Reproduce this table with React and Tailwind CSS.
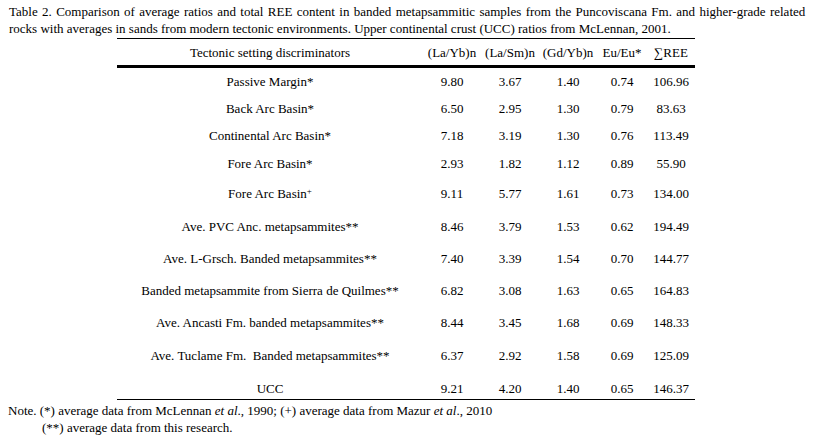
import React from "react";

const rows = [
  { label: "Passive Margin*", v: ["9.80", "3.67", "1.40", "0.74", "106.96"], h: "h-[27px]" },
  { label: "Back Arc Basin*", v: ["6.50", "2.95", "1.30", "0.79", "83.63"], h: "h-[27px]" },
  { label: "Continental Arc Basin*", v: ["7.18", "3.19", "1.30", "0.76", "113.49"], h: "h-[27px]" },
  { label: "Fore Arc Basin*", v: ["2.93", "1.82", "1.12", "0.89", "55.90"], h: "h-[28px]" },
  { label: "Fore Arc Basin", sup: "+", v: ["9.11", "5.77", "1.61", "0.73", "134.00"], h: "h-[33px]" },
  { label: "Ave. PVC Anc. metapsammites**", v: ["8.46", "3.79", "1.53", "0.62", "194.49"], h: "h-[33px]" },
  { label: "Ave. L-Grsch. Banded metapsammites**", v: ["7.40", "3.39", "1.54", "0.70", "144.77"], h: "h-[31px]" },
  { label: "Banded metapsammite from Sierra de Quilmes**", v: ["6.82", "3.08", "1.63", "0.65", "164.83"], h: "h-[32px]" },
  { label: "Ave. Ancasti Fm. banded metapsammites**", v: ["8.44", "3.45", "1.68", "0.69", "148.33"], h: "h-[32px]" },
  { label: "Ave. Tuclame Fm.  Banded metapsammites**", v: ["6.37", "2.92", "1.58", "0.69", "125.09"], h: "h-[34px]" },
  { label: "UCC", v: ["9.21", "4.20", "1.40", "0.65", "146.37"], h: "h-[27px] pt-[6px]" },
];

const headers = ["(La/Yb)n", "(La/Sm)n", "(Gd/Yb)n", "Eu/Eu*", "\u2211REE"];

const cols = "grid grid-cols-[306px_58px_58px_58px_50px_48px] items-center";

export default function App() {
  return (
    <div className="w-[833px] h-[439px] bg-white text-black font-['Liberation_Serif','DejaVu_Serif',serif] text-[13px] leading-[17px] overflow-hidden">
      {/* Caption: first line is spread to the full width, as in the justified original */}
      <div className="pt-[3px] pl-[9px] whitespace-nowrap">
        <p className="[word-spacing:1.1px]">
          Table 2. Comparison of average ratios and total REE content in banded metapsammitic samples from the Puncoviscana Fm. and higher-grade related
        </p>
        <p>
          rocks with averages in sands from modern tectonic environments. Upper continental crust (UCC) ratios from McLennan, 2001.
        </p>
      </div>

      {/* Table */}
      <div className="ml-[117px] w-[578px] mt-[1px] border-t border-b border-black">
        <div className={`${cols} h-[29px] border-b-[3px] border-black`}>
          <div className="text-center whitespace-nowrap">Tectonic setting discriminators</div>
          {headers.map((h, i) => (
            <div key={i} className="text-center whitespace-nowrap">
              {h}
            </div>
          ))}
        </div>

        {rows.map((r, i) => (
          <div key={i} className={`${cols} ${r.h}`}>
            <div className="text-center whitespace-pre">
              {r.label}
              {r.sup && <sup className="text-[9px]">{r.sup}</sup>}
            </div>
            {r.v.map((v, j) => (
              <div key={j} className="text-center">
                {v}
              </div>
            ))}
          </div>
        ))}
      </div>

      {/* Notes */}
      <div className="pt-[2px] pl-[8px] whitespace-nowrap">
        <p>
          Note. (*) average data from McLennan <i>et al</i>., 1990; (+) average data from Mazur <i>et al</i>., 2010
        </p>
        <p className="pl-[34px]">(**) average data from this research.</p>
      </div>
    </div>
  );
}
